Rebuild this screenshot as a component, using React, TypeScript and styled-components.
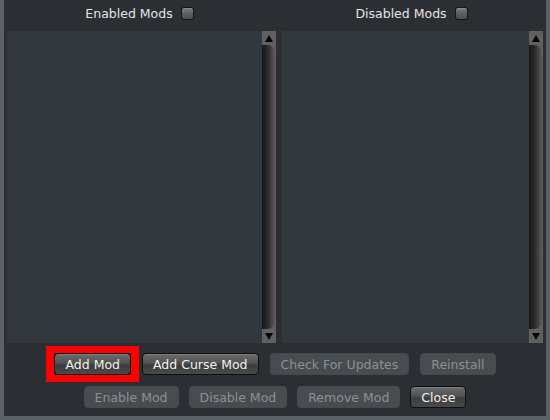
import React from "react";
import styled, { createGlobalStyle, css } from "styled-components";

const Global = createGlobalStyle`
  html, body { margin: 0; padding: 0; background: #5b6166; }
  body { font-family: "DejaVu Sans", "Noto Sans", sans-serif; }
  * { box-sizing: border-box; }
`;

const Frame = styled.div`
  width: 550px;
  height: 420px;
  padding: 0 4px 4px 4px;
  background: #5b6166;
`;

const Panel = styled.div`
  height: 416px;
  background: #2b2f34;
  padding: 0 3px 7px 3px;
  display: flex;
  flex-direction: column;
`;

const Columns = styled.div`
  display: grid;
  grid-template-columns: 269px 261px;
  column-gap: 6px;
`;

const Header = styled.div<{ $shift: number }>`
  height: 31px;
  display: flex;
  justify-content: center;
  align-items: flex-start;
  padding-top: 7px;
  padding-right: ${(p) => p.$shift}px;
  gap: 8px;
  color: #e4e4e4;
  font-size: 12.5px;
  line-height: 13px;
`;

const Check = styled.span`
  width: 13px;
  height: 13px;
  border: 1px solid #141414;
  border-radius: 3px;
  background: linear-gradient(#7a7a7a, #5a5a5a 60%, #4e4e4e);
  box-shadow: inset 0 1px 0 rgba(255,255,255,0.15);
`;

const List = styled.div`
  height: 312px;
  display: flex;
  background: #33383c;
`;

const ListBody = styled.div`
  flex: 1;
`;

const ScrollBar = styled.div`
  width: 14px;
  display: flex;
  flex-direction: column;
  background: #5e5e5e;
`;

const Arrow = styled.div`
  height: 14px;
  display: flex;
  align-items: center;
  justify-content: center;
  background: #606060;
`;

const Grabber = styled.div`
  flex: 1;
  border-radius: 0 7px 7px 0 / 0 10px 10px 0;
  background: linear-gradient(to right, #161616, #2c2c2c 45%, #4a4a4a 80%, #5a5a5a);
  margin-right: 1px;
`;

const Buttons = styled.div<{ $top: number; $gap: number }>`
  display: flex;
  justify-content: center;
  gap: ${(p) => p.$gap}px;
  margin-top: ${(p) => p.$top}px;
`;

const Highlight = styled.span`
  display: inline-flex;
  border: 7px solid #ff0000;
  border-left-width: 8px;
  border-right-width: 8px;
  margin: -7px -8px;
`;

const Button = styled.button<{ $disabled?: boolean }>`
  height: 22px;
  padding: 0 10px;
  margin: 0;
  font-family: "DejaVu Sans", "Noto Sans", sans-serif;
  font-size: 12.5px;
  border-radius: 4px;
  ${(p) =>
    p.$disabled
      ? css`
          background: #474c50;
          color: #8d9093;
          border: 1px solid #44494d;
        `
      : css`
          background: linear-gradient(#6c6c6c, #525252 45%, #3c3c3c 55%, #4a4a4a);
          color: #f2f2f2;
          border: 1px solid #0e0e0e;
          box-shadow: inset 0 1px 0 rgba(255, 255, 255, 0.12);
        `}
`;

const Tri = ({ up }: { up?: boolean }) => (
  <svg width="8" height="7" viewBox="0 0 8 7">
    <polygon points={up ? "4,0 8,7 0,7" : "0,0 8,0 4,7"} fill="#050505" />
  </svg>
);

const ModList = () => (
  <List>
    <ListBody />
    <ScrollBar>
      <Arrow>
        <Tri up />
      </Arrow>
      <Grabber />
      <Arrow>
        <Tri />
      </Arrow>
    </ScrollBar>
  </List>
);

export default function App() {
  return (
    <>
      <Global />
      <Frame>
        <Panel>
          <Columns>
            <Header $shift={4}>
              <span>Enabled Mods</span>
              <Check />
            </Header>
            <Header $shift={2}>
              <span>Disabled Mods</span>
              <Check />
            </Header>
            <ModList />
            <ModList />
          </Columns>
          <Buttons $top={10} $gap={11}>
            <Highlight>
              <Button>Add Mod</Button>
            </Highlight>
            <Button>Add Curse Mod</Button>
            <Button $disabled>Check For Updates</Button>
            <Button $disabled>Reinstall</Button>
          </Buttons>
          <Buttons $top={11} $gap={10}>
            <Button $disabled>Enable Mod</Button>
            <Button $disabled>Disable Mod</Button>
            <Button $disabled>Remove Mod</Button>
            <Button>Close</Button>
          </Buttons>
        </Panel>
      </Frame>
    </>
  );
}
